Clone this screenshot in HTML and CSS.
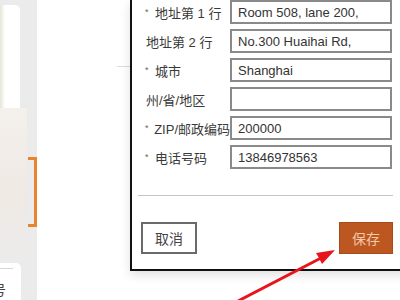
FILE: index.html
```html
<!DOCTYPE html>
<html lang="zh-CN">
<head>
  <meta charset="UTF-8" />
  <title>编辑地址</title>
  <link rel="stylesheet" href="styles.css">
</head>
<body>

  <div class="screen">
    <!-- Left strip (list behind the dialog) -->
    <aside class="side">
      <div class="side-card"></div>
      <div class="side-row">
        <div class="side-glow"></div>
        <div class="bracket"></div>
      </div>
      <div class="side-card bottom">
        <div class="side-rule"></div>
        <span class="side-glyph">号</span>
      </div>
    </aside>

    <!-- Address dialog -->
    <main class="stage">
      <div class="gutter"><div class="gutter-line"></div></div>

      <section class="dialog">
        <div class="form">
          <label class="label"><span class="req">*</span>地址第 1 行</label>
          <input class="field" type="text" value="Room 508, lane 200," />

          <label class="label plain">地址第 2 行</label>
          <input class="field" type="text" value="No.300 Huaihai Rd," />

          <label class="label"><span class="req">*</span>城市</label>
          <input class="field" type="text" value="Shanghai" />

          <label class="label plain">州/省/地区</label>
          <input class="field" type="text" value="" />

          <label class="label"><span class="req">*</span>ZIP/邮政编码</label>
          <input class="field" type="text" value="200000" />

          <label class="label"><span class="req">*</span>电话号码</label>
          <input class="field" type="text" value="13846978563" />
        </div>

        <hr class="divider">

        <div class="actions">
          <button class="btn cancel">取消</button>
          <button class="btn save">保存</button>
        </div>
      </section>
    </main>
  </div>

  <!-- annotation arrow pointing at the save button -->
  <svg class="arrow" width="400" height="300" viewBox="0 0 400 300">
    <line x1="238" y1="301" x2="321" y2="258" stroke="#e8141c" stroke-width="3" />
    <polygon points="335,250 322,264 319,258 316,253" fill="#e8141c" />
  </svg>

</body>
</html>
```

FILE: styles.css
```css
html, body {
  margin: 0;
  height: 100%;
}

body {
  font-family: "Liberation Sans", "Noto Sans CJK SC", sans-serif;
  background: #fff;
  color: #333;
  overflow: hidden;
  position: relative;
}

.screen {
  display: flex;
  width: 400px;
  height: 300px;
  overflow: hidden;
}

/* left strip */
.side {
  width: 37px;
  flex-shrink: 0;
  background: #ebebeb;
  display: flex;
  flex-direction: column;
}
.side-card {
  width: 20px;
  height: 103px;
  margin-top: 5px;
  background: linear-gradient(to right, #e3e6d6 0, #fff 5px);
  border-top-right-radius: 5px;
}
.side-row {
  display: flex;
  height: 152px;
}
.side-glow {
  width: 28px;
  background: linear-gradient(to bottom, #f4f0ec, #efe9e4 60%, #ebebeb);
}
.bracket {
  width: 6px;
  height: 64px;
  margin-top: 49px;
  margin-left: 1px;
  border: 3px solid #e8832e;
  border-left: none;
}
.side-card.bottom {
  width: 21px;
  height: 37px;
  margin-top: 3px;
  background: #fff;
  overflow: hidden;
}
.side-rule {
  width: 13px;
  height: 1px;
  margin-top: 5px;
  background: #d6d6d6;
}
.side-glyph {
  display: block;
  margin-top: 14px;
  margin-left: -8px;
  font-size: 14px;
  line-height: 14px;
  color: #444;
}

/* dialog area */
.stage {
  display: flex;
  flex: 1;
}
.gutter {
  width: 93px;
  flex-shrink: 0;
}
.gutter-line {
  width: 13px;
  height: 1px;
  margin-top: 66px;
  margin-left: 80px;
  background: #dcdcdc;
}

.dialog {
  flex-shrink: 0;
  align-self: flex-start;
  width: 261px;
  padding: 0 27px 15px 0;
  border-left: 2px solid #111;
  border-right: 2px solid #111;
  border-bottom: 2px solid #111;
  background: #fff;
  box-shadow: 0 4px 10px rgba(0, 0, 0, 0.12);
}

.form {
  display: grid;
  grid-template-columns: 98px 162px;
  grid-auto-rows: 24px;
  row-gap: 5px;
}
.label {
  display: flex;
  align-items: center;
  padding-left: 13px;
  font-size: 13px;
  color: #3a3a3a;
  white-space: nowrap;
}
.label.plain {
  padding-left: 14px;
}
.req {
  width: 10px;
  font-size: 9px;
  line-height: 9px;
  color: #666;
  margin-top: 0;
}
.field {
  box-sizing: border-box;
  width: 162px;
  height: 24px;
  margin: 0;
  padding: 0 6px;
  border: 2px solid #8a8a8a;
  border-radius: 0;
  font-family: "Liberation Sans", "Noto Sans CJK SC", sans-serif;
  font-size: 13px;
  color: #333;
  background: #fff;
  outline: none;
}

.divider {
  width: 255px;
  margin: 26px 0 0 6px;
  border: none;
  border-top: 1px solid #c4c4c4;
}

.actions {
  display: flex;
  justify-content: space-between;
  margin-top: 26px;
  padding-left: 9px;
}
.btn {
  box-sizing: border-box;
  height: 32px;
  font-family: "Liberation Sans", "Noto Sans CJK SC", sans-serif;
  font-size: 14px;
  border-radius: 0;
  cursor: pointer;
}
.btn.cancel {
  width: 56px;
  background: #fff;
  color: #444;
  border: 2px solid #6a6a6a;
}
.btn.save {
  width: 54px;
  background: #bd5722;
  color: #f3c9a8;
  border: 1px solid #a84a1b;
}

.arrow {
  position: absolute;
  left: 0;
  top: 0;
  pointer-events: none;
}
```
